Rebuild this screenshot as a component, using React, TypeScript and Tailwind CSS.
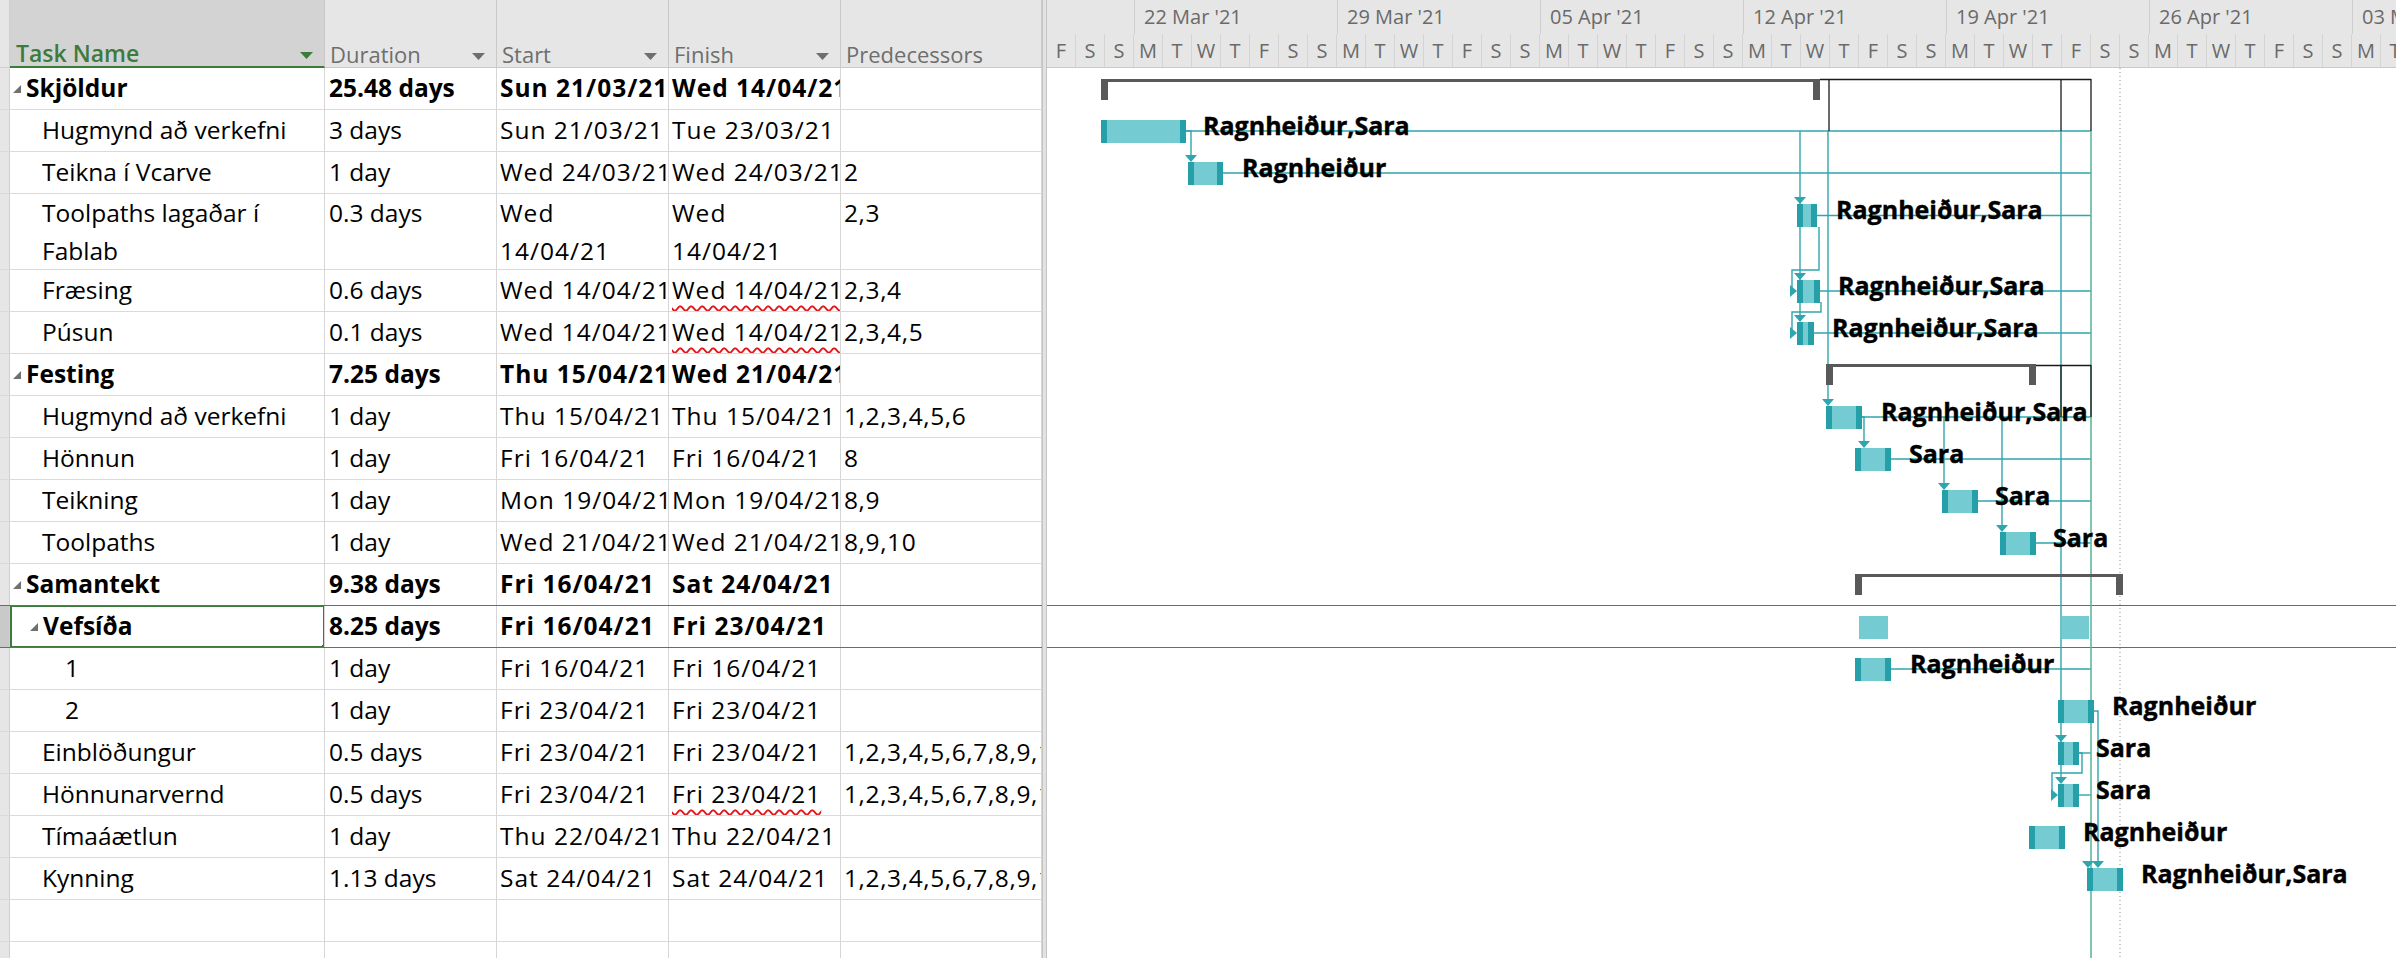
import React from "react";

type Kind = "sum1" | "sum2" | "task" | "sub" | "empty";

type Row = {
  name: string;
  dur: string;
  start: string;
  finish: string;
  pred: string;
  kind: Kind;
  tall?: boolean;
  wavy?: boolean;
  selected?: boolean;
};

const MANY = "1,2,3,4,5,6,7,8,9,10,11,13,14";

const rows: Row[] = [
  { name: "Skjöldur", dur: "25.48 days", start: "Sun 21/03/21", finish: "Wed 14/04/21", pred: "", kind: "sum1" },
  { name: "Hugmynd að verkefni", dur: "3 days", start: "Sun 21/03/21", finish: "Tue 23/03/21", pred: "", kind: "task" },
  { name: "Teikna í Vcarve", dur: "1 day", start: "Wed 24/03/21", finish: "Wed 24/03/21", pred: "2", kind: "task" },
  { name: "Toolpaths lagaðar í Fablab", dur: "0.3 days", start: "Wed 14/04/21", finish: "Wed 14/04/21", pred: "2,3", kind: "task", tall: true },
  { name: "Fræsing", dur: "0.6 days", start: "Wed 14/04/21", finish: "Wed 14/04/21", pred: "2,3,4", kind: "task", wavy: true },
  { name: "Púsun", dur: "0.1 days", start: "Wed 14/04/21", finish: "Wed 14/04/21", pred: "2,3,4,5", kind: "task", wavy: true },
  { name: "Festing", dur: "7.25 days", start: "Thu 15/04/21", finish: "Wed 21/04/21", pred: "", kind: "sum1" },
  { name: "Hugmynd að verkefni", dur: "1 day", start: "Thu 15/04/21", finish: "Thu 15/04/21", pred: "1,2,3,4,5,6", kind: "task" },
  { name: "Hönnun", dur: "1 day", start: "Fri 16/04/21", finish: "Fri 16/04/21", pred: "8", kind: "task" },
  { name: "Teikning", dur: "1 day", start: "Mon 19/04/21", finish: "Mon 19/04/21", pred: "8,9", kind: "task" },
  { name: "Toolpaths", dur: "1 day", start: "Wed 21/04/21", finish: "Wed 21/04/21", pred: "8,9,10", kind: "task" },
  { name: "Samantekt", dur: "9.38 days", start: "Fri 16/04/21", finish: "Sat 24/04/21", pred: "", kind: "sum1" },
  { name: "Vefsíða", dur: "8.25 days", start: "Fri 16/04/21", finish: "Fri 23/04/21", pred: "", kind: "sum2", selected: true },
  { name: "1", dur: "1 day", start: "Fri 16/04/21", finish: "Fri 16/04/21", pred: "", kind: "sub" },
  { name: "2", dur: "1 day", start: "Fri 23/04/21", finish: "Fri 23/04/21", pred: "", kind: "sub" },
  { name: "Einblöðungur", dur: "0.5 days", start: "Fri 23/04/21", finish: "Fri 23/04/21", pred: MANY, kind: "task" },
  { name: "Hönnunarvernd", dur: "0.5 days", start: "Fri 23/04/21", finish: "Fri 23/04/21", pred: MANY, kind: "task", wavy: true },
  { name: "Tímaáætlun", dur: "1 day", start: "Thu 22/04/21", finish: "Thu 22/04/21", pred: "", kind: "task" },
  { name: "Kynning", dur: "1.13 days", start: "Sat 24/04/21", finish: "Sat 24/04/21", pred: MANY, kind: "task" },
  { name: "", dur: "", start: "", finish: "", pred: "", kind: "empty" },
  { name: "", dur: "", start: "", finish: "", pred: "", kind: "empty" },
];

const weekLetters = ["F", "S", "S", "M", "T", "W", "T"];
const dayLetters = Array.from({ length: 47 }, (_, i) => weekLetters[i % 7]);
const weeks = ["22 Mar '21", "29 Mar '21", "05 Apr '21", "12 Apr '21", "19 Apr '21", "26 Apr '21", "03 May '21"];

function DropArrow({ color }: { color: string }) {
  return (
    <svg width="13" height="7" viewBox="0 0 13 7" className="mb-[7px] mr-[11px] shrink-0">
      <polygon points="0,0 13,0 6.5,7" fill={color} />
    </svg>
  );
}

function Expander() {
  return (
    <svg width="8" height="8" viewBox="0 0 8 8" className="shrink-0">
      <polygon points="8,0 8,8 0,8" fill="#707070" />
    </svg>
  );
}

function TableRow({ row }: { row: Row }) {
  const bold = row.kind === "sum1" || row.kind === "sum2";
  const line = row.name === "Samantekt" || row.selected ? "border-[#6b6b6b]" : "border-[#dadada]";
  const cellBase = row.tall
    ? "flex items-start overflow-hidden border-r border-[#d6d6d6] leading-[38px]"
    : "flex items-center overflow-hidden whitespace-nowrap border-r border-[#d6d6d6]";
  const date = "tracking-[1px]";
  return (
    <div className={`flex shrink-0 border-b ${line} ${row.tall ? "h-[76px]" : "h-[42px]"} ${bold ? "font-bold" : "font-normal"}`}>
      <div className={`w-[10px] shrink-0 border-r border-[#cfcfcf] ${row.selected ? "bg-[#c9c9c9]" : "bg-[#e6e6e6]"}`} />
      <div className={`relative w-[315px] shrink-0 ${cellBase}`}>
        {row.kind === "sum1" && (
          <div className="flex items-center gap-[5px] pl-[3px]">
            <Expander />
            <span>{row.name}</span>
          </div>
        )}
        {row.kind === "sum2" && (
          <div className="flex items-center gap-[5px] pl-[20px]">
            <Expander />
            <span>{row.name}</span>
          </div>
        )}
        {row.kind === "task" && <span className="pl-[32px] pr-[6px]">{row.name}</span>}
        {row.kind === "sub" && <span className="pl-[55px]">{row.name}</span>}
        {row.selected && (
          <>
            <div className="pointer-events-none absolute -top-[1px] left-0 right-[-1px] bottom-[-1px] border-2 border-[#3d7b3d]" />
            <div className="absolute bottom-[-4px] right-[-4px] h-[6px] w-[6px] bg-[#3d7b3d]" />
          </>
        )}
      </div>
      <div className={`w-[172px] shrink-0 pl-[4px] ${cellBase}`}>{row.dur}</div>
      <div className={`w-[172px] shrink-0 pl-[3px] ${cellBase} ${date}`}>{row.start}</div>
      <div className={`w-[172px] shrink-0 pl-[3px] ${cellBase} ${date}`}>
        <span
          className={
            row.wavy
              ? "underline decoration-wavy decoration-[#e3161b] decoration-2 underline-offset-[6px]"
              : ""
          }
        >
          {row.finish}
        </span>
      </div>
      <div className={`w-[201px] shrink-0 pl-[3px] ${cellBase} tracking-[0.6px]`}>{row.pred}</div>
    </div>
  );
}

const T = "#2fa6ad";
const GREENISH = "#5fb79e";
const LIGHT = "#74cbd2";
const DARK = "#26a0a8";
const SUM = "#595959";

const bars: [number, number, number][] = [
  [1101, 1186, 120],
  [1188, 1223, 162],
  [1797, 1817, 204],
  [1797, 1820, 280],
  [1797, 1814, 322],
  [1826, 1862, 406],
  [1855, 1891, 448],
  [1942, 1978, 490],
  [2000, 2036, 532],
  [1855, 1891, 658],
  [2058, 2094, 700],
  [2058, 2079, 742],
  [2058, 2079, 784],
  [2029, 2065, 826],
  [2087, 2123, 868],
];

const summaries: [number, number, number][] = [
  [1101, 1820, 79],
  [1826, 2036, 364],
  [1855, 2123, 574],
];

const labels: [number, number, string][] = [
  [1203, 135, "Ragnheiður,Sara"],
  [1242, 177, "Ragnheiður"],
  [1836, 219, "Ragnheiður,Sara"],
  [1838, 295, "Ragnheiður,Sara"],
  [1832, 337, "Ragnheiður,Sara"],
  [1881, 421, "Ragnheiður,Sara"],
  [1909, 463, "Sara"],
  [1995, 505, "Sara"],
  [2053, 547, "Sara"],
  [1910, 673, "Ragnheiður"],
  [2112, 715, "Ragnheiður"],
  [2096, 757, "Sara"],
  [2096, 799, "Sara"],
  [2083, 841, "Ragnheiður"],
  [2141, 883, "Ragnheiður,Sara"],
];

const hLines: [number, number, number][] = [
  [1186, 2091, 131],
  [1223, 2091, 173],
  [1817, 2091, 215.5],
  [1820, 2091, 291],
  [1814, 2091, 333],
  [1862, 2091, 417],
  [1891, 2091, 459],
  [1978, 2091, 501],
  [2036, 2091, 543],
  [1891, 2091, 669],
  [2079, 2091, 753],
  [2079, 2091, 795],
];

const downArrows: [number, number][] = [
  [1191, 162],
  [1800, 204],
  [1800, 280],
  [1800, 322],
  [1828, 406],
  [1864, 448],
  [1944, 490],
  [2002, 532],
  [2061, 742],
  [2061, 784],
  [2088, 868],
  [2098, 868],
];

const rightArrows: [number, number][] = [
  [1797, 291],
  [1797, 333],
  [2058, 795],
];

function GanttChart() {
  return (
    <svg
      className="pointer-events-none absolute left-0 top-0"
      width="1349"
      height="958"
      viewBox="1047 0 1349 958"
    >
      <line x1="2120" y1="68" x2="2120" y2="958" stroke="#8c8c8c" strokeWidth="1" strokeDasharray="1 3" />

      {hLines.map(([a, b, y], i) => (
        <line key={`h${i}`} x1={a} y1={y} x2={b} y2={y} stroke={T} strokeWidth="1.4" />
      ))}

      <g fill="none" stroke={T} strokeWidth="1.4">
        <polyline points="1186,131 1191,131 1191,156" />
        <line x1="1800" y1="131" x2="1800" y2="316" />
        <line x1="1828" y1="131" x2="1828" y2="400" />
        <polyline points="1862,417 1864,417 1864,442" />
        <line x1="1944" y1="417" x2="1944" y2="484" />
        <line x1="2002" y1="417" x2="2002" y2="526" />
        <line x1="2061" y1="131" x2="2061" y2="778" />
        <polyline points="1819,227 1819,270 1792,270 1792,291 1791,291" />
        <polyline points="1821,302 1821,312 1792,312 1792,333 1791,333" />
        <polyline points="2079,753 2082,753 2082,773 2052,773 2052,795 2052,795" />
        <polyline points="2094,711 2098,711 2098,862" />
      </g>
      <line x1="2091" y1="131" x2="2091" y2="958" stroke={GREENISH} strokeWidth="1.6" />

      <g fill="none" stroke="#1a1a1a" strokeWidth="1.3">
        <line x1="1820" y1="79.5" x2="2091" y2="79.5" />
        <line x1="1829" y1="79" x2="1829" y2="131" />
        <line x1="2061" y1="79" x2="2061" y2="131" />
        <line x1="2091" y1="79" x2="2091" y2="131" />
        <line x1="2036" y1="365.5" x2="2091" y2="365.5" />
        <line x1="2061" y1="365" x2="2061" y2="417" />
        <line x1="2091" y1="365" x2="2091" y2="417" />
      </g>

      {summaries.map(([a, b, y], i) => (
        <g key={`s${i}`} fill={SUM}>
          <rect x={a} y={y} width={b - a} height={3} />
          <rect x={a} y={y} width={7} height={21} />
          <rect x={b - 7} y={y} width={7} height={21} />
        </g>
      ))}

      <rect x="1859" y="616" width="29" height="23" fill={LIGHT} />
      <rect x="2062" y="616" width="27" height="23" fill={LIGHT} />

      {bars.map(([a, b, y], i) => (
        <g key={`b${i}`}>
          <rect x={a} y={y} width={b - a} height={23} fill={LIGHT} />
          <rect x={a} y={y} width={6} height={23} fill={DARK} />
          <rect x={b - 6} y={y} width={6} height={23} fill={DARK} />
        </g>
      ))}

      {downArrows.map(([cx, tip], i) => (
        <polygon key={`d${i}`} points={`${cx - 6},${tip - 7} ${cx + 6},${tip - 7} ${cx},${tip}`} fill={T} />
      ))}
      {rightArrows.map(([tip, cy], i) => (
        <polygon key={`r${i}`} points={`${tip - 7},${cy - 6} ${tip - 7},${cy + 6} ${tip},${cy}`} fill={T} />
      ))}

      {labels.map(([x, y, t], i) => (
        <text
          key={`l${i}`}
          x={x}
          y={y}
          fontFamily="'Open Sans', sans-serif"
          fontSize="25"
          fontWeight="700"
          fill="#000"
          stroke="#000"
          strokeWidth="0.4"
        >
          {t}
        </text>
      ))}
    </svg>
  );
}

export default function App() {
  return (
    <div className="flex h-[958px] w-[2396px] overflow-hidden bg-white font-['Open_Sans',sans-serif] text-[24.5px] text-black">
      {/* task table */}
      <div className="flex w-[1042px] shrink-0 flex-col">
        <div className="flex h-[68px] shrink-0">
          <div className="w-[10px] shrink-0 border-b border-r border-[#cfcfcf] bg-[#e6e6e6]" />
          <div className="flex w-[315px] shrink-0 items-end justify-between border-b-2 border-r border-b-[#3d7b3d] border-r-[#c9c9c9] bg-[#d3d3d3]">
            <span className="pl-[6px] text-[23px] font-semibold leading-[26px] text-[#3d7b3d]">Task Name</span>
            <DropArrow color="#3d7b3d" />
          </div>
          {[
            ["Duration", 172, true],
            ["Start", 172, true],
            ["Finish", 172, true],
            ["Predecessors", 201, false],
          ].map(([label, w, arrow]) => (
            <div
              key={label as string}
              className={`flex shrink-0 items-end justify-between border-b border-r border-[#c9c9c9] bg-[#e6e6e6] ${
                w === 201 ? "w-[201px]" : "w-[172px]"
              }`}
            >
              <span className="pl-[5px] text-[22px] leading-[26px] text-[#6e6e6e]">{label as string}</span>
              {arrow && <DropArrow color="#6e6e6e" />}
            </div>
          ))}
        </div>
        {rows.map((r, i) => (
          <TableRow key={i} row={r} />
        ))}
      </div>

      {/* splitter */}
      <div className="h-full w-[5px] shrink-0 border-x border-[#c4c4c4] bg-[#e2e2e2]" />

      {/* gantt */}
      <div className="relative flex min-w-0 flex-1 flex-col overflow-hidden">
        <div className="flex h-[68px] shrink-0 flex-col border-b border-[#c9c9c9] bg-[#e6e6e6] text-[20px] text-[#6a6a6a]">
          <div className="flex h-[34px] shrink-0">
            <div className="w-[87px] shrink-0" />
            {weeks.map((w) => (
              <div key={w} className="w-[203px] shrink-0 border-l border-[#cfcfcf] pl-[9px] leading-[34px]">
                {w}
              </div>
            ))}
          </div>
          <div className="flex h-[33px] shrink-0">
            {dayLetters.map((d, i) => (
              <div key={i} className="w-[29px] shrink-0 border-r border-[#d4d4d4] text-center leading-[33px]">
                {d}
              </div>
            ))}
          </div>
        </div>
        <div className="h-[537px] shrink-0" />
        <div className="h-[43px] shrink-0 border-y border-[#6b6b6b]" />
        <GanttChart />
      </div>
    </div>
  );
}
